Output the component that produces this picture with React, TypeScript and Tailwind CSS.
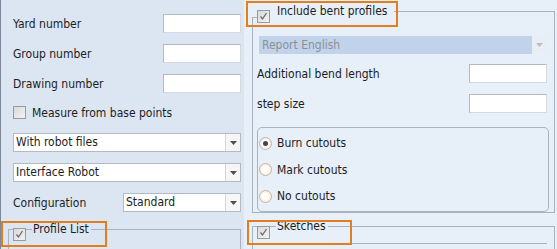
import React from "react";

const font = { fontFamily: '"DejaVu Sans Condensed", "DejaVu Sans", sans-serif', fontStretch: "condensed" as const };

function CheckBox({ checked }: { checked?: boolean }) {
	return (
		<span className="box-border flex h-[13px] w-[13px] shrink-0 items-center justify-center border border-[#9b9b9b] bg-gradient-to-br from-[#d9d9d9] to-[#f3f3f3]">
			{checked && (
				<svg viewBox="0 0 11 11" className="h-[11px] w-[11px]" aria-hidden="true">
					<path d="M2.5 5.5l2 2.5 4-6" fill="none" stroke="#6a6a6a" strokeWidth="1.3" />
				</svg>
			)}
		</span>
	);
}

function Radio({ checked }: { checked?: boolean }) {
	return (
		<span className="box-border flex h-[13px] w-[13px] shrink-0 items-center justify-center rounded-full border border-[#cdb39c] bg-[radial-gradient(circle,#ffffff_30%,#f2dfcc_100%)]">
			{checked && <span className="h-[5px] w-[5px] rounded-full bg-[#39465a]" />}
		</span>
	);
}

function TextBox() {
	return <div className="box-border h-[19px] w-[78px] border border-[#b4bac2] border-b-[#d6d9de] border-r-[#d6d9de] bg-white" />;
}

function Arrow({ light }: { light?: boolean }) {
	return (
		<svg viewBox="0 0 7 4" className="h-[4px] w-[7px]" aria-hidden="true">
			<path d="M0 0h7L3.5 4Z" fill={light ? "#b9bec5" : "#4f4f4f"} />
		</svg>
	);
}

function Select({ value, className }: { value: string; className?: string }) {
	return (
		<div className={`box-border flex h-[19px] items-stretch border border-[#b4bac2] bg-white ${className ?? ""}`}>
			<span className="flex-1 pl-[2px] text-[12px] leading-[17px] text-[#1b1d24]">{value}</span>
			<span className="flex w-[15px] items-center justify-center border-l border-[#d3d7dd] bg-[#f6f6f6]">
				<Arrow />
			</span>
		</div>
	);
}

function Row({ label, children }: { label: string; children: React.ReactNode }) {
	return (
		<div className="flex h-[19px] items-center justify-between">
			<span className="text-[12px] leading-[14px] text-[#1b1d24]">{label}</span>
			{children}
		</div>
	);
}

export default function App() {
	return (
		<div className="relative flex h-[249px] w-[557px] overflow-hidden select-none" style={font}>
			{/* left column */}
			<div className="box-border flex w-[244px] shrink-0 flex-col border-l border-[#7d899b] bg-[#dce6f2] pl-[12px] pr-[3px] pt-[14px]">
				<Row label="Yard number">
					<TextBox />
				</Row>
				<div className="mt-[11px]">
					<Row label="Group number">
						<TextBox />
					</Row>
				</div>
				<div className="mt-[11px]">
					<Row label="Drawing number">
						<TextBox />
					</Row>
				</div>
				<div className="mt-[13px] flex h-[13px] items-center gap-[6px]">
					<CheckBox />
					<span className="text-[12px] leading-[14px] text-[#1b1d24]">Measure from base points</span>
				</div>
				<Select value="With robot files" className="mt-[14px]" />
				<Select value="Interface Robot" className="mt-[11px]" />
				<div className="mt-[11px] flex h-[19px] items-center justify-between">
					<span className="text-[12px] leading-[14px] text-[#1b1d24]">Configuration</span>
					<Select value="Standard" className="w-[118px]" />
				</div>
				<div className="relative -ml-[5px] mt-[17px] h-[30px] border-l border-r border-t border-[#a9b3bf]">
					<span className="absolute -top-[2px] left-[4px] flex">
						<CheckBox checked />
					</span>
					<span className="absolute -top-[8px] left-[23px] bg-[#dce6f2] pl-[1px] pr-[2px] text-[12px] leading-[14px] text-[#1b1d24]">
						Profile List
					</span>
				</div>
			</div>

			{/* right column */}
			<div className="box-border flex flex-1 flex-col bg-[#e7eff9] pl-[8px] pr-[2px] pt-[11px]">
				<div className="relative box-border flex h-[206px] flex-col border border-[#a9b3bf] pl-[4px] pr-[5px]">
					<span className="absolute -left-[1px] -top-[7px] h-[13px] w-[142px] bg-[#e7eff9]" />
					<span className="absolute -left-[1px] top-[5px] h-px w-[5px] bg-[#a9b3bf]" />
					<span className="absolute -top-[2px] left-[4px] flex">
						<CheckBox checked />
					</span>
					<span className="absolute -top-[8px] left-[24px] text-[12px] leading-[14px] text-[#1b1d24]">
						Include bent profiles
					</span>

					<div className="ml-[2px] mr-[2px] mt-[24px] flex h-[18px] items-stretch bg-[#c0d3ea]">
						<span className="flex-1 pl-[3px] text-[12px] leading-[18px] text-[#8b9098]">Report English</span>
						<span className="flex w-[15px] items-center justify-center bg-[#e9eef5]">
							<Arrow light />
						</span>
					</div>
					<div className="mr-[2px] mt-[10px]">
						<Row label="Additional bend length">
							<TextBox />
						</Row>
					</div>
					<div className="mr-[2px] mt-[11px]">
						<Row label="step size">
							<TextBox />
						</Row>
					</div>
					<div className="mt-[14px] box-border flex h-[85px] flex-col rounded-[5px] border border-[#a9b3bf] pl-[1px] pt-[2px]">
						{["Burn cutouts", "Mark cutouts", "No cutouts"].map((t, i) => (
							<div key={t} className="flex h-[26.5px] items-center gap-[5px]">
								<Radio checked={i === 0} />
								<span className="text-[12px] leading-[14px] text-[#1b1d24]">{t}</span>
							</div>
						))}
					</div>
				</div>

				<div className="relative mt-[13px] h-[30px] border-l border-r border-t border-[#a9b3bf]">
					<span className="absolute -top-[1px] left-[4px] flex">
						<CheckBox checked />
					</span>
					<span className="absolute -top-[8px] left-[23px] bg-[#e7eff9] pl-[1px] pr-[2px] text-[12px] leading-[14px] text-[#1b1d24]">
						Sketches
					</span>
					<div className="ml-[8px] mr-[7px] mt-[16px] h-[4px] border-t border-[#a9b3bf]" />
				</div>
			</div>

			{/* highlight annotations */}
			<div className="pointer-events-none absolute left-[246px] top-[1px] h-[26px] w-[152px] border-2 border-[#e37d1d]" />
			<div className="pointer-events-none absolute left-[1px] top-[221px] h-[26px] w-[106px] border-2 border-[#e37d1d]" />
			<div className="pointer-events-none absolute left-[247px] top-[220px] h-[25px] w-[105px] border-2 border-[#e37d1d]" />
		</div>
	);
}
